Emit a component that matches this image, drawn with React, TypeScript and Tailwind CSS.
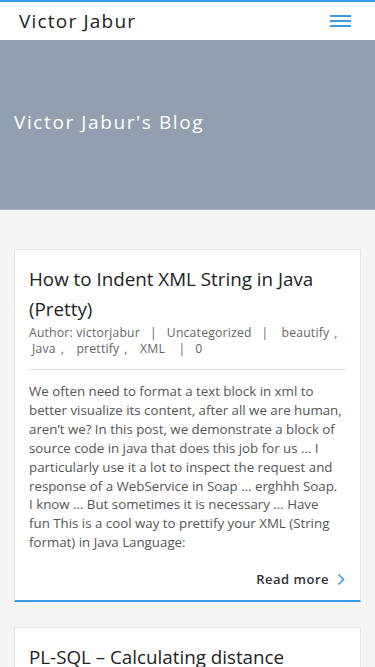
import React from 'react';

const posts = [
  {
    title: 'How to Indent XML String in Java (Pretty)',
    author: 'victorjabur',
    category: 'Uncategorized',
    tags: ['beautify', 'Java', 'prettify', 'XML'],
    comments: 0,
    excerpt:
      'We often need to format a text block in xml to better visualize its content, after all we are human, aren\u2019t we? In this post, we demonstrate a block of source code in java that does this job for us \u2026 I particularly use it a lot to inspect the request and response of a WebService in Soap \u2026 erghhh Soap. I\u00a0know \u2026 But sometimes it is necessary \u2026 Have fun\u00a0This is a cool way to prettify your XML (String format) in Java Language:',
  },
  {
    title: 'PL-SQL \u2013 Calculating distance between two points',
    author: 'victorjabur',
    category: 'Uncategorized',
    tags: ['Oracle', 'PL-SQL'],
    comments: 0,
    excerpt: 'A function to calculate the distance between two geographic points using latitude and longitude.',
  },
];

const Sep = () => <span className="mx-[10px]">|</span>;

const App: React.FC = () => {
  return (
    <div className="min-h-screen bg-[#f5f5f5] font-['Open_Sans',sans-serif]">
      {/* Header */}
      <header className="h-10 bg-white border-t-2 border-[#3a9ae3] flex items-center justify-between pl-[19px] pr-6">
        <span className="text-[19px] tracking-[1.2px] text-[#222]">Victor Jabur</span>
        <button className="flex flex-col gap-[3px] w-[21px]">
          <span className="h-[2px] bg-[#3a9ae3]" />
          <span className="h-[2px] bg-[#3a9ae3]" />
          <span className="h-[2px] bg-[#3a9ae3]" />
        </button>
      </header>

      {/* Hero */}
      <section className="h-[170px] bg-[#929fb0] border-b border-[#a9b4c2] flex items-center pl-[14px] pb-[5px]">
        <h1 className="text-[19px] tracking-[1.6px] text-white">Victor Jabur's Blog</h1>
      </section>

      {/* Posts */}
      <main className="px-[14px] pt-[39px] flex flex-col gap-[25px]">
        {posts.map((p) => (
          <article key={p.title} className="bg-white border border-[#e6e6e6] border-b-2 border-b-[#3a9ae3] px-[14px] pt-[14px] pb-[10px]">
            <h2 className="text-[18.8px] leading-[30px] text-[#222]">{p.title}</h2>
            <p className="text-[12.2px] leading-[16px] tracking-[0.2px] text-[#666] mt-[1px] pb-[12px] border-b border-[#e0e0e0]">
              <span className="whitespace-nowrap">Author: {p.author}</span>
              <Sep />
              {p.category}
              <Sep />
              {p.tags.map((t, i) => (
                <React.Fragment key={t}>
                  <span className="ml-[3px]">{t}</span>
                  {i < p.tags.length - 1 && <span className="ml-[5px] mr-[6px]">,</span>}{' '}
                </React.Fragment>
              ))}
              <Sep />
              {p.comments}
            </p>
            <p className="text-[13.3px] leading-[18.9px] text-[#555] mt-[12px]">{p.excerpt}</p>
            <div className="flex justify-end items-center gap-2 mt-[18px] pr-[1px]">
              <span className="text-[13px] font-semibold tracking-[0.5px] text-[#333]">Read more</span>
              <svg width="8" height="13" viewBox="0 0 8 13" fill="none" stroke="#3a9ae3" strokeWidth="1.6">
                <path d="M1.5 1.5 L6.5 6.5 L1.5 11.5" />
              </svg>
            </div>
          </article>
        ))}
      </main>
    </div>
  );
};

export default App;
